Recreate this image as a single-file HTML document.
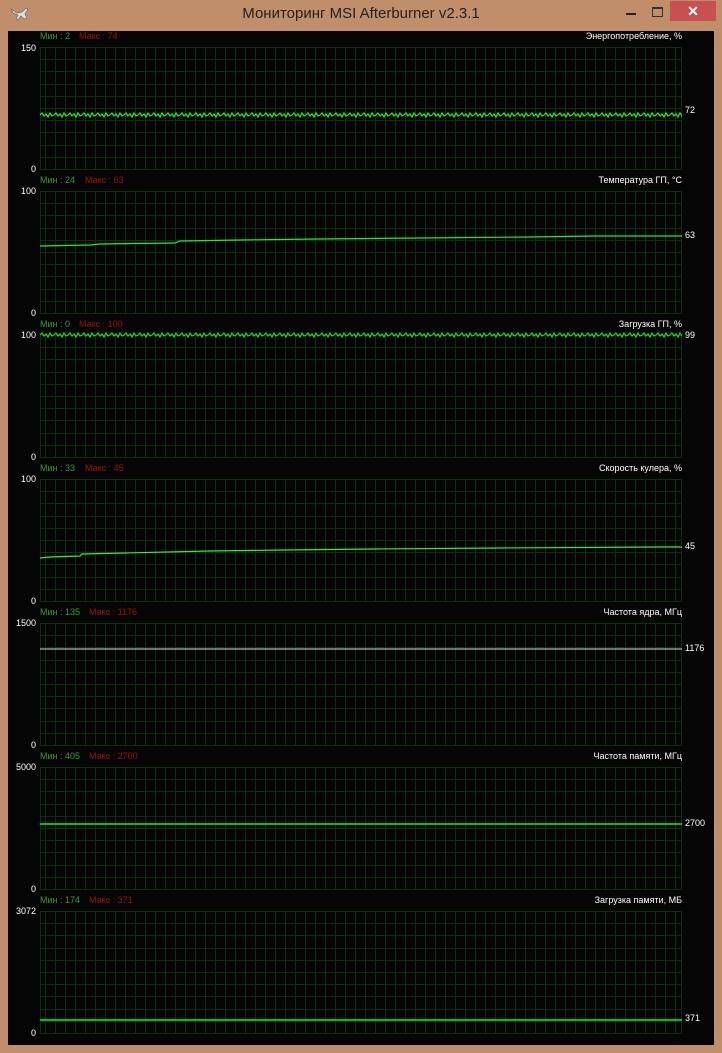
<!DOCTYPE html>
<html><head><meta charset="utf-8"><style>
html,body{margin:0;padding:0;width:722px;height:1053px;overflow:hidden;background:#c18e6b;font-family:"Liberation Sans",sans-serif}
.title{position:absolute;left:0;top:0;width:722px;height:30px;text-align:center;line-height:28px;font-size:15px;color:#222}
.close{position:absolute;left:670px;top:1px;width:46px;height:20px;background:#c75050;color:#fff;text-align:center;line-height:20px;font-size:14px;font-weight:bold}
.min{position:absolute;left:626px;top:13px;width:10px;height:2px;background:#222}
.max{position:absolute;left:652px;top:7px;width:9px;height:7px;border:1px solid #333;border-top-width:2px}
.black{position:absolute;left:8px;top:31px;width:706px;height:1014px;background:#050505}
svg{position:absolute;left:0;top:0}
</style></head><body>
<div class="title">Мониторинг MSI Afterburner v2.3.1</div>
<svg width="30" height="30" style="left:8px;top:5px"><path d="M3 4 L9 8 L14 7 L18 3 L20 4 L17 9 L19 13 L16 14 L13 11 L10 15 L8 14 L10 10 L5 8 Z" fill="#ddd" stroke="#666" stroke-width="0.7"/></svg>
<div class="min"></div><div class="max"></div><div class="close">✕</div>
<div class="black"></div>
<svg width="722" height="1053" font-family="Liberation Sans, sans-serif" font-size="9">
<defs>
<pattern id="v" x="5" y="0" width="10" height="4" patternUnits="userSpaceOnUse">
<rect x="0" y="0" width="1" height="4" fill="#0f2d0f"/>
</pattern>
<g id="hg" fill="#0f2d0f">
<rect x="40" y="0" width="642" height="1"/><rect x="40" y="12" width="642" height="1"/><rect x="40" y="24" width="642" height="1"/><rect x="40" y="37" width="642" height="1"/><rect x="40" y="49" width="642" height="1"/><rect x="40" y="61" width="642" height="1"/><rect x="40" y="73" width="642" height="1"/><rect x="40" y="85" width="642" height="1"/><rect x="40" y="98" width="642" height="1"/><rect x="40" y="110" width="642" height="1"/><rect x="40" y="122" width="642" height="1"/>
<rect x="40" y="0" width="1" height="122"/><rect x="681" y="0" width="1" height="122"/>
</g>
<pattern id="z" x="40" y="0" width="14" height="10" patternUnits="userSpaceOnUse">
<path d="M0 5 L2 3 L4 6 L6 4 L8 7 L10 3 L12 6 L14 5" stroke="#22ee22" stroke-width="1.2" fill="none"/>
</pattern>
</defs>
<g>
<rect x="41" y="47" width="640" height="122" fill="url(#v)"/>
<rect x="41" y="191" width="640" height="122" fill="url(#v)"/>
<rect x="41" y="335" width="640" height="122" fill="url(#v)"/>
<rect x="41" y="479" width="640" height="122" fill="url(#v)"/>
<rect x="41" y="623" width="640" height="122" fill="url(#v)"/>
<rect x="41" y="767" width="640" height="122" fill="url(#v)"/>
<rect x="41" y="911" width="640" height="122" fill="url(#v)"/>
<use href="#hg" y="47"/><use href="#hg" y="191"/><use href="#hg" y="335"/><use href="#hg" y="479"/><use href="#hg" y="623"/><use href="#hg" y="767"/><use href="#hg" y="911"/>
</g>
<rect x="40" y="108" width="642" height="10" fill="url(#z)"/>
<polyline points="40,246 90,245 100,244 175,243 180,241 240,240 320,239 420,238 530,237 595,236 682,236" stroke="#22ee22" stroke-width="1.2" fill="none"/>
<rect x="40" y="332" width="642" height="8" fill="url(#z)" opacity="0.9"/>
<polyline points="40,558 50,557 80,556 82,554 125,553 210,551 285,550 375,549 500,548 655,547 682,547" stroke="#33ee33" stroke-width="1.2" fill="none"/>
<line x1="40" y1="649" x2="682" y2="649" stroke="#ddd" stroke-width="1"/>
<line x1="40" y1="824" x2="682" y2="824" stroke="#00ff00" stroke-width="1.5"/>
<line x1="40" y1="1020" x2="682" y2="1020" stroke="#00ff00" stroke-width="1.5"/>
<g fill="#fff">
<text x="36" y="51" text-anchor="end">150</text>
<text x="36" y="172" text-anchor="end">0</text>
<text x="36" y="194" text-anchor="end">100</text>
<text x="36" y="316" text-anchor="end">0</text>
<text x="36" y="338" text-anchor="end">100</text>
<text x="36" y="460" text-anchor="end">0</text>
<text x="36" y="482" text-anchor="end">100</text>
<text x="36" y="604" text-anchor="end">0</text>
<text x="36" y="626" text-anchor="end">1500</text>
<text x="36" y="748" text-anchor="end">0</text>
<text x="36" y="770" text-anchor="end">5000</text>
<text x="36" y="892" text-anchor="end">0</text>
<text x="36" y="914" text-anchor="end">3072</text>
<text x="36" y="1036" text-anchor="end">0</text>
<text x="685" y="113">72</text>
<text x="685" y="238">63</text>
<text x="685" y="338">99</text>
<text x="685" y="549">45</text>
<text x="685" y="651">1176</text>
<text x="685" y="826">2700</text>
<text x="685" y="1021">371</text>
<g text-anchor="end">
<text x="682" y="39">Энергопотребление, %</text>
<text x="682" y="183">Температура ГП, °C</text>
<text x="682" y="327">Загрузка ГП, %</text>
<text x="682" y="471">Скорость кулера, %</text>
<text x="682" y="615">Частота ядра, МГц</text>
<text x="682" y="759">Частота памяти, МГц</text>
<text x="682" y="903">Загрузка памяти, МБ</text>
</g>
</g>
<g fill="#3a9a3a">
<text x="40" y="39">Мин : 2</text><text x="40" y="183">Мин : 24</text><text x="40" y="327">Мин : 0</text><text x="40" y="471">Мин : 33</text><text x="40" y="615">Мин : 135</text><text x="40" y="759">Мин : 405</text><text x="40" y="903">Мин : 174</text>
</g>
<g fill="#a01010">
<text x="79" y="39">Макс : 74</text><text x="85" y="183">Макс : 63</text><text x="79" y="327">Макс : 100</text><text x="85" y="471">Макс : 45</text><text x="89" y="615">Макс : 1176</text><text x="89" y="759">Макс : 2700</text><text x="89" y="903">Макс : 371</text>
</g>
</svg>
</body></html>
